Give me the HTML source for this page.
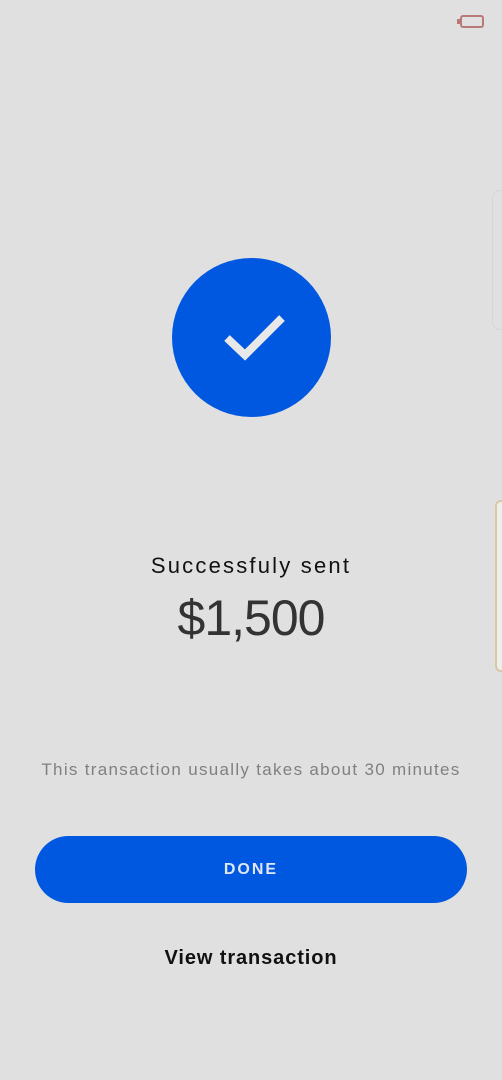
<!DOCTYPE html>
<html><head><style>
body{margin:0;width:502px;height:1080px;background:#e0e0e0;position:relative;overflow:hidden;font-family:"Liberation Sans",sans-serif}
.a{position:absolute}
</style></head><body>
<div class="a" style="left:460px;top:15px;width:24px;height:13px;border:2px solid #b77a78;border-radius:3px;box-sizing:border-box"></div>
<div class="a" style="left:457px;top:19px;width:3px;height:5px;background:#b77a78"></div>
<div class="a" style="left:492px;top:190px;width:14px;height:138px;border:1px solid #d6d6d6;border-radius:8px"></div>
<div class="a" style="left:495px;top:500px;width:10px;height:168px;background:#eee;border:2px solid #d8c9a2;border-radius:6px"></div>
<div class="a" style="left:172px;top:258px;width:159px;height:159px;border-radius:50%;background:#0158e0"></div>
<svg class="a" style="left:172px;top:258px" width="159" height="159"><path d="M55 80 L73 97 L110 60" stroke="#e8e8e8" stroke-width="8" fill="none"/></svg>
<div class="a" style="left:0;width:502px;top:553px;text-align:center;font-size:22px;color:#111;letter-spacing:2.2px">Successfuly sent</div>
<div class="a" style="left:0;width:502px;top:589px;text-align:center;font-size:50px;color:#333;letter-spacing:-1px">$1,500</div>
<div class="a" style="left:0;width:502px;top:760px;text-align:center;font-size:17px;color:#808080;letter-spacing:1.3px">This transaction usually takes about 30 minutes</div>
<div class="a" style="left:35px;top:836px;width:432px;height:67px;border-radius:34px;background:#0158e0;color:#e0e8f8;font-size:16px;font-weight:bold;letter-spacing:2px;text-align:center;line-height:67px">DONE</div>
<div class="a" style="left:0;width:502px;top:947px;text-align:center;font-size:20px;font-weight:bold;color:#111;letter-spacing:0.9px">View transaction</div>
</body></html>
